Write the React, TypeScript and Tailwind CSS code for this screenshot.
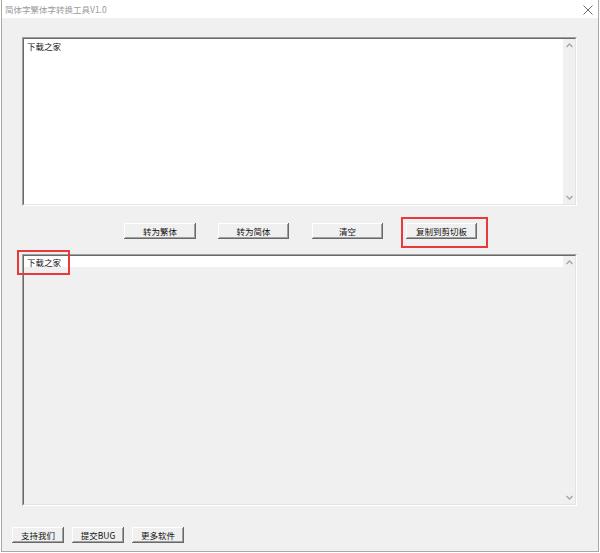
import React from 'react';

const FONT = { fontFamily: '"Noto Sans CJK SC", "Liberation Sans", sans-serif' };

function Chevron({ up }: { up?: boolean }) {
  return (
    <svg width="7" height="5" viewBox="0 0 7 5" className="block">
      <path
        d={up ? 'M0.5 4 L3.5 1 L6.5 4' : 'M0.5 1 L3.5 4 L6.5 1'}
        fill="none"
        stroke="#a6a6a6"
        strokeWidth="1.4"
      />
    </svg>
  );
}

function WinButton({ label, className = '' }: { label: string; className?: string }) {
  return (
    <div
      className={`h-4 flex items-center justify-center bg-[#f0f0f0] text-[8.5px] leading-none text-[#111] shadow-[inset_-1px_-1px_0_#696969,inset_1px_1px_0_#ffffff,inset_-2px_-2px_0_#a0a0a0] ${className}`}
    >
      {label}
    </div>
  );
}

function TextBox({
  height,
  readOnly,
  children,
}: {
  height: string;
  readOnly?: boolean;
  children: React.ReactNode;
}) {
  return (
    <div className={`w-[555px] ${height} border border-t-[#a0a0a0] border-l-[#a0a0a0] border-r-white border-b-white`}>
      <div className="w-full h-full flex border border-t-[#696969] border-l-[#696969] border-r-[#e3e3e3] border-b-[#e3e3e3]">
        <div className={`flex-1 relative ${readOnly ? 'bg-[#f0f0f0]' : 'bg-white'}`}>
          {readOnly && <div className="h-[11px] bg-white" />}
          <div className={`absolute left-[3px] ${readOnly ? 'top-[1px]' : 'top-[2px]'} text-[8.5px] leading-[10px] text-[#111]`}>
            {children}
          </div>
        </div>
        <div className="w-[12px] bg-[#f0f0f0] flex flex-col items-center justify-between pt-[4px] pb-[4px]">
          <Chevron up />
          <Chevron />
        </div>
      </div>
    </div>
  );
}

export default function App() {
  return (
    <div className="w-[600px] h-[553px] bg-white" style={FONT}>
      <div className="w-[598px] h-[552px] ml-px border-x border-b border-[#a8a8a8] flex flex-col">
        {/* Title bar */}
        <div className="h-[18px] bg-white flex items-center justify-between pl-[3px] pr-[5px]">
          <span className="text-[8.5px] leading-none text-[#9a9a9a]">简体字繁体字转换工具V1.0</span>
          <svg width="10" height="10" viewBox="0 0 10 10" className="mt-[2px]">
            <path d="M0.5 0.5 L9.5 9.5 M9.5 0.5 L0.5 9.5" stroke="#6b6b6b" strokeWidth="1" />
          </svg>
        </div>

        {/* Body */}
        <div className="flex-1 bg-[#f0f0f0] flex flex-col pl-5 pt-[19px]">
          <TextBox height="h-[169px]">下载之家</TextBox>

          {/* Convert buttons */}
          <div className="flex mt-[17px] pl-[102px]">
            <WinButton label="转为繁体" className="w-[72px]" />
            <WinButton label="转为简体" className="w-[71px] ml-[22px]" />
            <WinButton label="清空" className="w-[71px] ml-[23px]" />
            <div className="relative ml-[23px]">
              <WinButton label="复制到剪切板" className="w-[71px]" />
              <div className="absolute left-[-5px] right-[-11px] top-[-6px] bottom-[-9px] border-2 border-[#e83a3a]" />
            </div>
          </div>

          <div className="relative mt-[15px]">
            <TextBox height="h-[252px]" readOnly>
              下载之家
            </TextBox>
            <div className="absolute left-[-5px] top-[-4px] w-[53px] h-[25px] border-2 border-[#e83a3a]" />
          </div>

          {/* Bottom buttons */}
          <div className="flex mt-[21px] ml-[-10px] gap-2">
            <WinButton label="支持我们" className="w-[52px]" />
            <WinButton label="提交BUG" className="w-[52px]" />
            <WinButton label="更多软件" className="w-[52px]" />
          </div>
        </div>
      </div>
    </div>
  );
}
